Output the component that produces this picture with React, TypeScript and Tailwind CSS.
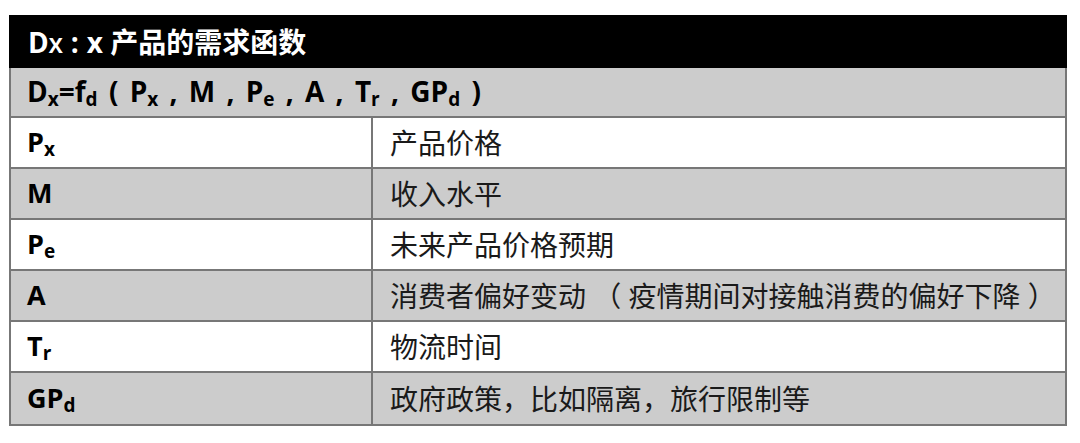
function Sub({ c }: { c: string }) {
  return <span className="text-[19px] align-[-0.22em]">{c}</span>;
}

const rows: { label: React.ReactNode; text: string; grey: boolean }[] = [
  { label: <>P<Sub c="x" /></>, text: '产品价格', grey: false },
  { label: <>M</>, text: '收入水平', grey: true },
  { label: <>P<Sub c="e" /></>, text: '未来产品价格预期', grey: false },
  { label: <>A</>, text: '消费者偏好变动 （ 疫情期间对接触消费的偏好下降 ）', grey: true },
  { label: <>T<Sub c="r" /></>, text: '物流时间', grey: false },
  { label: <>GP<Sub c="d" /></>, text: '政府政策，比如隔离，旅行限制等', grey: true },
];

export default function App() {
  return (
    <div
      className="w-[1080px] h-[443px] bg-white pt-[15px] pl-[9px]"
      style={{ fontFamily: '"Open Sans", "Noto Sans CJK SC", sans-serif' }}
    >
      <div className="w-[1058px] border-2 border-[#777] border-t-0">
        <div className="h-[53px] bg-black text-white font-bold text-[28px] flex items-center -mx-[2px] px-[19px]">
          <span className="whitespace-pre">
            D<span className="text-[21px]">X</span>
            <span className="mx-[8px]">:</span>x 产品的需求函数
          </span>
        </div>
        <div className="h-[50px] bg-[#cccccc] border-b-2 border-[#777] text-black font-bold text-[28px] flex items-center pl-[16px]">
          <span className="whitespace-pre [word-spacing:4px]">
            D<Sub c="x" />=f<Sub c="d" /> ( P<Sub c="x" /> , M , P<Sub c="e" /> , A , T<Sub c="r" /> , GP<Sub c="d" /> )
          </span>
        </div>
        {rows.map((r, i) => (
          <div
            key={i}
            className={`grid grid-cols-[362px_1fr] h-[51px] ${r.grey ? 'bg-[#cccccc]' : 'bg-white'} ${
              i < rows.length - 1 ? 'border-b-2 border-[#777]' : ''
            }`}
          >
            <div className="border-r-2 border-[#777] flex items-center pl-[16px] font-bold text-[27px] text-black">
              <span>{r.label}</span>
            </div>
            <div className="flex items-center pl-[17px] text-[28px] text-[#1a1a1a] whitespace-pre">{r.text}</div>
          </div>
        ))}
      </div>
    </div>
  );
}
